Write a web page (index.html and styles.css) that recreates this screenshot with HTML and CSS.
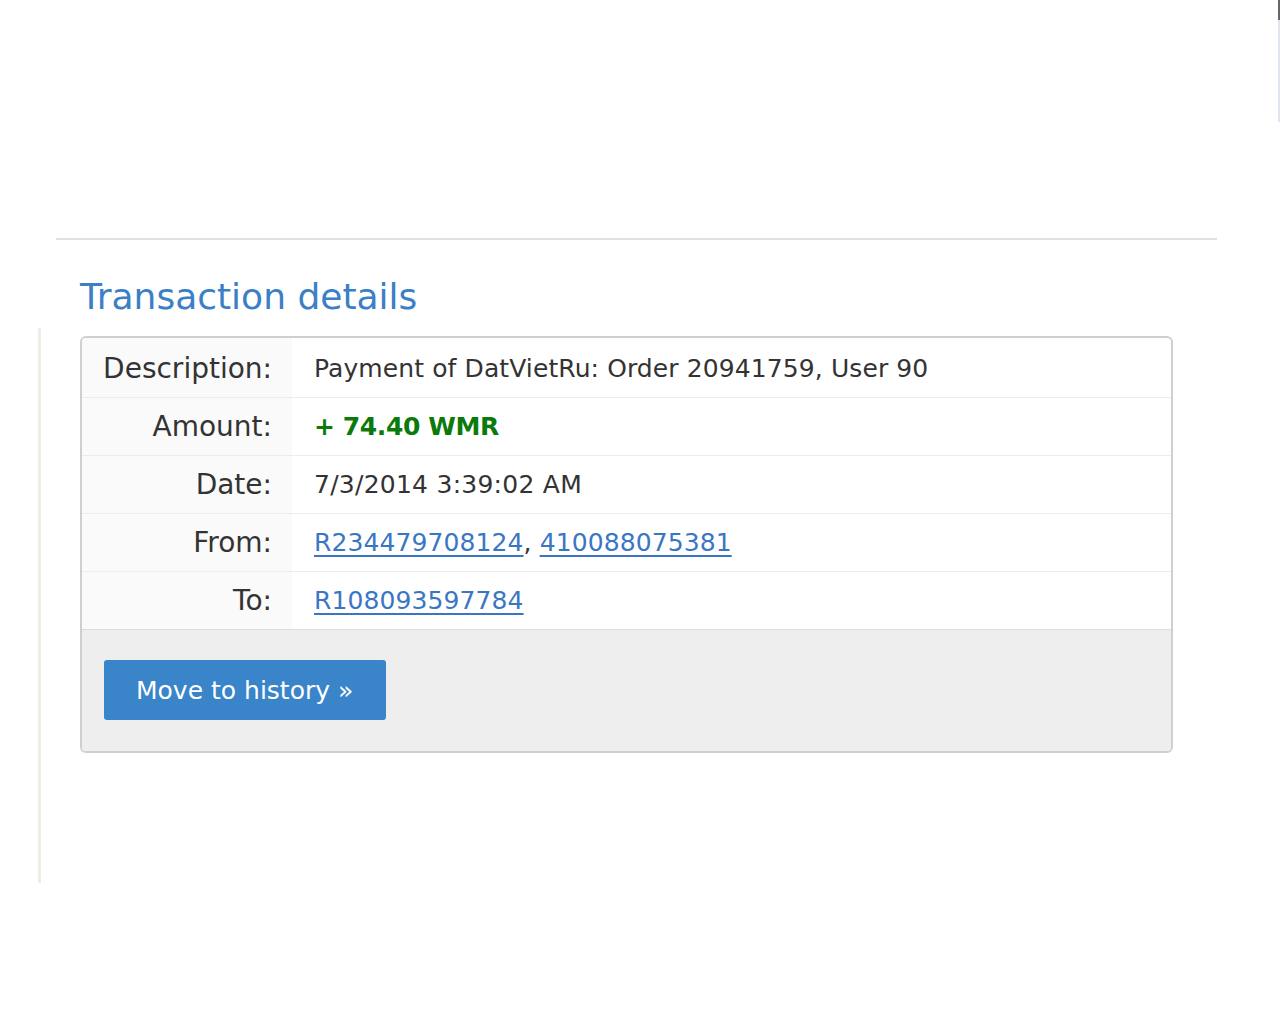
FILE: index.html
```html
<!DOCTYPE html>
<html>
<head>
<meta charset="utf-8">
<link rel="stylesheet" href="styles.css">
</head>
<body>
<div class="scroll-edge"><div class="thumb"></div><div class="track"></div></div>
<div class="page">
  <hr class="rule">
  <div class="content">
    <div class="side-line"></div>
    <div class="main">
      <h1 class="title">Transaction details</h1>
      <div class="panel">
        <div class="row first">
          <div class="label">Description:</div>
          <div class="value">Payment of DatVietRu: Order 20941759, User 90</div>
        </div>
        <div class="row">
          <div class="label">Amount:</div>
          <div class="value amount">+ 74.40 WMR</div>
        </div>
        <div class="row">
          <div class="label">Date:</div>
          <div class="value date">7/3/2014 3:39:02 AM</div>
        </div>
        <div class="row">
          <div class="label">From:</div>
          <div class="value"><a href="#">R234479708124</a>, <a href="#">410088075381</a></div>
        </div>
        <div class="row">
          <div class="label">To:</div>
          <div class="value"><a href="#">R108093597784</a></div>
        </div>
        <div class="footer">
          <button class="btn">Move to history »</button>
        </div>
      </div>
    </div>
  </div>
</div>
</body>
</html>
```
FILE: styles.css
```css
html, body {
  margin: 0;
  padding: 0;
  background: #fff;
  font-family: "DejaVu Sans", Verdana, sans-serif;
  color: #333;
}
.scroll-edge {
  position: absolute;
  top: 0;
  right: 0;
  width: 2px;
}
.scroll-edge .thumb {
  height: 20px;
  background: #666;
}
.scroll-edge .track {
  height: 102px;
  background: #dfe6f0;
}
.page {
  padding-top: 238px;
}
.rule {
  margin: 0 63px 0 56px;
  border: 0;
  height: 2px;
  background: #e2e2e2;
}
.content {
  display: flex;
  align-items: flex-start;
  margin-left: 38px;
}
.side-line {
  flex: none;
  width: 3px;
  height: 555px;
  margin-top: 88px;
  background: #efede6;
}
.main {
  padding-left: 39px;
}
.title {
  margin: 0;
  padding-top: 36px;
  height: 58px;
  box-sizing: border-box;
  font-weight: normal;
  font-size: 36px;
  line-height: 42px;
  color: #3b80c6;
  font-family: "DejaVu Sans", Tahoma, sans-serif;
}
.panel {
  margin-top: 38px;
  width: 1093px;
  box-sizing: border-box;
  border: 2px solid #cfcfcf;
  border-radius: 6px;
  overflow: hidden;
}
.row {
  display: flex;
  height: 57px;
  border-bottom: 1px solid #ececec;
}
.row.first {
  height: 59px;
}
.label {
  width: 210px;
  flex: none;
  background: #fafafa;
  text-align: right;
  padding-right: 20px;
  box-sizing: border-box;
  font-size: 28px;
  line-height: 58px;
  color: #333;
}
.row.first .label,
.row.first .value {
  line-height: 62px;
}
.value {
  padding-left: 22px;
  font-size: 25px;
  line-height: 58px;
  color: #333;
  letter-spacing: 0.1px;
}
.value.date {
  letter-spacing: 0.25px;
}
.value a {
  color: #3a76c4;
  text-decoration: underline;
  text-underline-offset: 4px;
}
.amount {
  color: #0b7a0b;
  font-weight: bold;
  letter-spacing: -0.4px;
}
.footer {
  background: #eeeeee;
  border-top: 1px solid #dddddd;
  padding: 30px 22px 31px;
  margin-top: -1px;
}
.btn {
  display: block;
  width: 282px;
  height: 60px;
  border: 0;
  border-radius: 3px;
  background: #3a84c9;
  color: #fff;
  font-family: "DejaVu Sans", Tahoma, sans-serif;
  font-size: 25px;
  text-align: left;
  padding-left: 32px;
}
```
